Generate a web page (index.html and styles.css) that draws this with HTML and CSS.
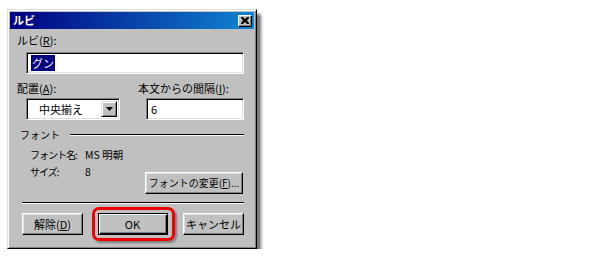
FILE: index.html
```html
<!DOCTYPE html>
<html lang="ja">
<head>
<meta charset="utf-8">
<link rel="stylesheet" href="styles.css">
</head>
<body>
<div class="dialog">
  <div class="titlebar">
    <span class="title">ルビ</span>
    <span class="close"><svg width="8" height="7" viewBox="0 0 8 7"><path d="M0 0h2l2 2 2-2h2v1l-2 2.5 2 2.5v1h-2l-2-2-2 2h-2v-1l2-2.5-2-2.5z" fill="#000"/></svg></span>
  </div>
  <div class="content">
    <div class="label">ルビ(<u>R</u>):</div>
    <div class="field wide"><span class="sel">グン</span></div>

    <div class="row2">
      <div class="col">
        <div class="label">配置(<u>A</u>):</div>
        <div class="combo">
          <span class="combo-text">中央揃え</span>
          <span class="drop"><svg width="7" height="4" viewBox="0 0 7 4"><path d="M0 0h7l-3.5 4z" fill="#000"/></svg></span>
        </div>
      </div>
      <div class="col">
        <div class="label">本文からの間隔(<u>I</u>):</div>
        <div class="field small">6</div>
      </div>
    </div>

    <div class="group-head"><span>フォント</span><span class="rule"></span></div>
    <div class="font-area">
      <div class="info">
        <span class="key">フォント名:</span><span>MS 明朝</span>
        <span class="key">サイズ:</span><span>8</span>
      </div>
      <button class="btn change">フォントの変更(<u>F</u>)...</button>
    </div>

    <div class="sep"></div>

    <div class="buttons">
      <button class="btn">解除(<u>D</u>)</button>
      <span class="highlight"><button class="btn default">OK</button></span>
      <button class="btn">キャンセル</button>
    </div>
  </div>
</div>
</body>
</html>
```

FILE: styles.css
```css
* { box-sizing: border-box; }
html, body { margin: 0; background: #fff; }
body {
  padding: 9px 0 0 7px;
  font-family: "Noto Sans CJK JP", "Noto Sans", sans-serif;
  font-size: 11px;
  line-height: 14px;
  color: #000;
}
.dialog {
  width: 250px;
  height: 240px;
  background: #c0c0c0;
  border: 1px solid;
  border-color: #dfdfdf #000 #000 #dfdfdf;
  box-shadow: inset 1px 1px #fff, inset -1px -1px #808080, 4px 5px 3px rgba(0,0,0,0.55);
  padding: 2px;
  display: flex;
  flex-direction: column;
}
.titlebar {
  height: 17px;
  flex: none;
  background: linear-gradient(to right, #000080, #1084d0);
  display: flex;
  align-items: center;
  justify-content: space-between;
  padding: 0 2px 0 3px;
}
.title { color: #fff; font-weight: bold; font-size: 11px; line-height: 1; }
.close {
  width: 14px; height: 12px;
  background: #c0c0c0;
  border: 1px solid; border-color: #fff #000 #000 #fff;
  box-shadow: inset -1px -1px #808080;
  display: flex; align-items: center; justify-content: center;
}
.close svg { display: block; }
.content {
  padding: 4px 10px 0 7px;
  display: flex;
  flex-direction: column;
}
.label { line-height: 14px; height: 14px; white-space: nowrap; }
u { text-decoration: underline; text-underline-offset: 1px; }
.field {
  background: #fff;
  border: 1px solid; border-color: #808080 #fff #fff #808080;
  box-shadow: inset 1px 1px #000, inset -1px -1px #dfdfdf;
  height: 22px;
  padding: 3px 4px;
  line-height: 14px;
}
.wide { margin: 5px 0 0 9px; width: 218px; }
.sel { background: #000080; color: #fff; padding: 0 1px; }
.row2 {
  display: grid;
  grid-template-columns: 121px 1fr;
  margin-top: 7px;
}
.combo {
  margin: 3px 0 0 9px;
  width: 94px; height: 22px;
  background: #fff;
  border: 1px solid; border-color: #808080 #fff #fff #808080;
  box-shadow: inset 1px 1px #000, inset -1px -1px #dfdfdf;
  display: flex; align-items: center;
  padding: 2px;
}
.combo-text { flex: 1; padding-left: 10px; }
.drop {
  width: 16px; height: 16px;
  background: #c0c0c0;
  border: 1px solid; border-color: #dfdfdf #000 #000 #dfdfdf;
  box-shadow: inset 1px 1px #fff, inset -1px -1px #808080;
  display: flex; align-items: center; justify-content: center;
}
.drop svg { display: block; }
.small { margin: 3px 0 0 8px; width: 98px; }
.group-head {
  display: flex; align-items: center;
  margin: 8px 0 0 3px;
  height: 14px;
  font-size: 10px;
}
.rule {
  flex: 1;
  margin-left: 10px;
  height: 2px;
  border-top: 1px solid #000;
  border-bottom: 1px solid #fff;
}
.font-area {
  display: flex;
  justify-content: space-between;
  align-items: flex-end;
  margin: 5px 1px 0 13px;
}
.info {
  display: grid;
  grid-template-columns: 55px auto;
  row-gap: 2px;
  line-height: 15px;
  font-size: 10.5px;
  white-space: nowrap;
  margin-bottom: 15px;
}
.key { font-size: 10px; letter-spacing: -1px; }
.btn {
  font: inherit;
  color: #000;
  background: #c0c0c0;
  border: 1px solid; border-color: #fff #000 #000 #fff;
  box-shadow: inset -1px -1px #808080, inset 1px 1px #dfdfdf;
  height: 22px;
  padding: 0;
  line-height: 18px;
  white-space: nowrap;
}
.change { width: 98px; font-size: 10px; }
.sep {
  margin: 8px 0 0 5px;
  height: 2px;
  border-top: 1px solid #000;
  border-bottom: 1px solid #fff;
}
.buttons {
  display: flex;
  justify-content: space-between;
  align-items: center;
  margin: 3px 0 0 5px;
}
.buttons > .btn { width: 61px; }
.highlight {
  border: 3px solid #e00;
  border-radius: 7px;
  padding: 3px 4px 3px 3px;
  box-shadow: 2px 2px 2px rgba(0,0,0,0.35);
  display: flex;
}
.default {
  width: 70px;
  border: 1px solid #000;
  box-shadow: inset 1px 1px #fff, inset -1px -1px #000, inset -2px -2px #808080;
}
```
